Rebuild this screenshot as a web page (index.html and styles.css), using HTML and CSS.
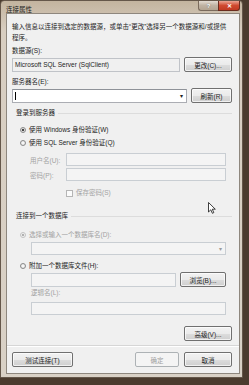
FILE: index.html
```html
<!DOCTYPE html>
<html lang="zh-CN">
<head>
    <meta charset="UTF-8">
    <meta name="viewport" content="width=device-width, initial-scale=1.0">
    <title>连接属性</title>
    <link rel="stylesheet" href="styles.css">
</head>
<body>
    <div class="window">
        <div class="titlebar">
            <span class="title">连接属性</span>
            <div class="caption">
                <span class="cap help">?</span>
                <span class="cap close">✕</span>
            </div>
        </div>
        <div class="client">
            <p class="intro">输入信息以连接到选定的数据源，或单击“更改”选择另一个数据源和/或提供<br>程序。</p>

            <div class="lbl first">数据源(S):</div>
            <div class="row">
                <div class="field readonly">Microsoft SQL Server (SqlClient)</div>
                <button class="btn">更改(C)...</button>
            </div>

            <div class="lbl">服务器名(E):</div>
            <div class="row">
                <div class="field combo"><span class="caret"></span><span class="arrow">▾</span></div>
                <button class="btn narrow">刷新(R)</button>
            </div>

            <div class="group-head login"><span>登录到服务器</span></div>
            <div class="group">
                <div class="opt opt-first"><span class="radio on"></span>使用 Windows 身份验证(W)</div>
                <div class="opt"><span class="radio"></span>使用 SQL Server 身份验证(Q)</div>
                <div class="cred user">
                    <span class="cred-lbl off">用户名(U):</span>
                    <div class="field disabled"></div>
                </div>
                <div class="cred pass">
                    <span class="cred-lbl off">密码(P):</span>
                    <div class="field disabled"></div>
                </div>
                <div class="save off"><span class="check"></span>保存密码(S)</div>
            </div>

            <div class="group-head db"><span>连接到一个数据库</span></div>
            <div class="group">
                <div class="opt off pick"><span class="radio dim on"></span>选择或输入一个数据库名(D):</div>
                <div class="field disabled combo sub"><span class="arrow off">▾</span></div>
                <div class="opt attach"><span class="radio"></span>附加一个数据库文件(H):</div>
                <div class="row sub">
                    <div class="field disabled"></div>
                    <button class="btn browse">浏览(B)...</button>
                </div>
                <div class="lbl off sub logical">逻辑名(L):</div>
                <div class="field disabled sub logical-field"></div>
            </div>

            <div class="adv-row">
                <button class="btn">高级(V)...</button>
            </div>

            <div class="sep"></div>

            <div class="footer">
                <button class="btn test">测试连接(T)</button>
                <button class="btn ok" disabled>确定</button>
                <button class="btn">取消</button>
            </div>
        </div>
        <svg class="pointer" width="8" height="12" viewBox="0 0 8 12">
            <path d="M0.5 0.5 L0.5 10 L2.8 7.8 L4.4 11.3 L5.8 10.6 L4.3 7.2 L7.3 7.2 Z" fill="#fff" stroke="#111" stroke-width="0.8"/>
        </svg>
    </div>
</body>
</html>
```

FILE: styles.css
```css
* {
    box-sizing: border-box;
}
body {
    margin: 0;
    background: #4b3b2e;
    font-family: "Liberation Sans", "Noto Sans CJK SC", sans-serif;
    font-size: 6.5px;
    color: #1e1e1e;
}
.window {
    position: relative;
    width: 243px;
    height: 378px;
    background: linear-gradient(#c3b49f, #d8cec1 30px, #d9d1c6);
    border: 1px solid #65574a;
    border-radius: 4px 4px 0 0;
    display: flex;
    flex-direction: column;
    padding: 0 2px 3px 5px;
}
.titlebar {
    height: 12px;
    display: flex;
    align-items: flex-start;
}
.title {
    padding-top: 3px;
    color: #1a1a1a;
}
.caption {
    margin-left: auto;
    display: flex;
}
.cap {
    height: 10px;
    display: flex;
    align-items: center;
    justify-content: center;
    color: #fff;
    font-weight: bold;
    border: 1px solid #7a6a5c;
    border-top: none;
}
.help {
    width: 20px;
    background: linear-gradient(#e3dbd1, #bfb2a2 50%, #b3a491);
    border-radius: 0 0 0 3px;
    border-right: none;
    font-size: 6px;
    text-shadow: 0 0 1px #555;
}
.close {
    width: 22px;
    background: linear-gradient(#eba593, #cf4a30 50%, #c13a22);
    border-color: #6b2c1e;
    border-radius: 0 0 3px 0;
    font-size: 6px;
}
.client {
    flex: 1;
    background: #f0f0f0;
    border: 1px solid #8e877e;
    display: flex;
    flex-direction: column;
    padding: 7px 7px 0 5px;
}
.intro {
    margin: 0;
    line-height: 11px;
}
.lbl {
    line-height: 10px;
    margin-top: 5px;
}
.lbl.first {
    margin-top: 3px;
}
.row {
    display: flex;
    align-items: center;
    gap: 4px;
    margin-top: 1px;
}
.field {
    height: 14px;
    border: 1px solid #abadb3;
    border-top-color: #8e9298;
    background: #fff;
    display: flex;
    align-items: center;
    padding-left: 2px;
}
.row .field {
    flex: 1;
}
.readonly {
    background: #f0f0f0;
    border-color: #c0c3c8;
}
.combo {
    position: relative;
}
.caret {
    width: 1px;
    height: 8px;
    background: #000;
}
.arrow {
    margin-left: auto;
    margin-right: 3px;
    font-size: 6px;
    color: #222;
}
.arrow.off {
    color: #9a9a9a;
}
.btn {
    width: 48px;
    height: 15px;
    padding: 0;
    font: inherit;
    color: #1e1e1e;
    border: 1px solid #707070;
    border-radius: 2px;
    background: linear-gradient(#f2f2f2, #ebebeb 50%, #dddddd 51%, #cfcfcf);
    box-shadow: inset 0 0 0 1px rgba(255, 255, 255, 0.7);
}
.btn.narrow {
    width: 41px;
}
.group-head {
    display: flex;
    align-items: center;
    line-height: 10px;
    padding-left: 4px;
    margin-top: 5px;
}
.group-head::after {
    content: "";
    flex: 1;
    height: 1px;
    margin-left: 3px;
    background: #dcdcdc;
}
.group-head.db {
    margin-top: 13px;
}
.group {
    display: flex;
    flex-direction: column;
    padding: 0 6px 0 8px;
}
.opt {
    display: flex;
    align-items: center;
    line-height: 10px;
    margin-top: 3px;
}
.opt-first {
    margin-top: 7px;
}
.radio {
    width: 6px;
    height: 6px;
    border-radius: 50%;
    border: 1px solid #8a8a8a;
    background: radial-gradient(#ffffff, #dcdcdc);
    margin-right: 3px;
    flex: none;
}
.radio.on {
    background: radial-gradient(#333 0, #555 1.3px, #e6e6e6 1.6px);
}
.radio.dim {
    border-color: #c2c2c2;
    background: radial-gradient(#aaa 0, #b5b5b5 1.3px, #f3f3f3 1.6px);
}
.off {
    color: #a2a2a2;
}
.cred {
    display: flex;
    align-items: center;
    padding-left: 10px;
}
.cred.user {
    margin-top: 5px;
}
.cred.pass {
    margin-top: 2px;
}
.cred-lbl {
    width: 36px;
}
.cred .field {
    flex: 1;
    height: 13px;
}
.disabled {
    background: #f4f4f4;
    border-color: #c9ced3;
}
.save {
    display: flex;
    align-items: center;
    line-height: 10px;
    margin-top: 7px;
    padding-left: 46px;
}
.check {
    width: 7px;
    height: 7px;
    border: 1px solid #b5b5b5;
    background: #fbfbfb;
    margin-right: 3px;
}
.pick {
    margin-top: 9px;
}
.sub {
    margin-left: 11px;
}
.field.sub {
    margin-top: 2px;
    height: 13px;
}
.attach {
    margin-top: 6px;
}
.row.sub {
    margin-top: 1px;
    gap: 4px;
}
.browse {
    width: 46px;
    color: #1e1e1e;
}
.logical {
    margin-top: 1px;
}
.field.logical-field {
    margin-top: 4px;
}
.adv-row {
    display: flex;
    justify-content: flex-end;
    margin-top: 11px;
}
.sep {
    margin: 4px -7px 0 -5px;
    border-top: 1px solid #d6d6d6;
    border-bottom: 1px solid #fff;
}
.footer {
    display: flex;
    gap: 5px;
    margin-top: 5px;
}
.btn.test {
    width: 61px;
    margin-right: auto;
}
.btn.ok {
    width: 44px;
    color: #a0a0a0;
    border-color: #adb2b5;
    background: #f4f4f4;
    box-shadow: none;
}
.pointer {
    position: absolute;
    left: 207px;
    top: 201px;
}
```
